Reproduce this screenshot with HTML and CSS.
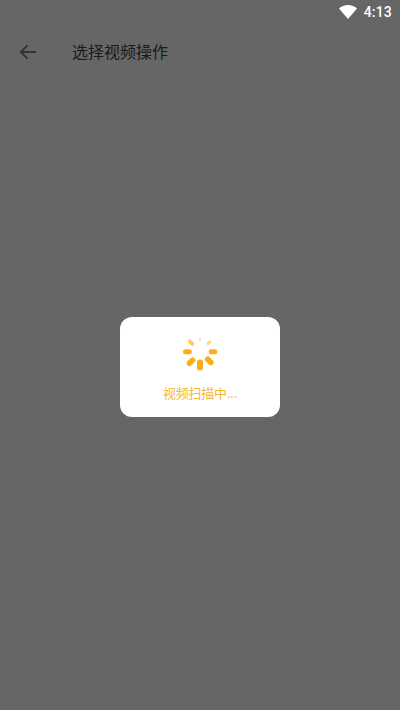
FILE: index.html
```html
<!DOCTYPE html>
<html lang="zh">
<head>
<meta charset="utf-8">
<title>选择视频操作</title>
<link rel="stylesheet" href="styles.css">
</head>
<body>
<div class="screen">
  <div class="status">
    <svg class="wifi" width="18" height="14" viewBox="0 0 18 14"><path d="M0 3.400C2.400 1.300 5.500 0 9 0s6.600 1.300 9 3.400L9 14z" fill="#fff"/></svg>
    <span class="time">4:13</span>
  </div>
  <header class="toolbar">
    <svg class="back" width="18" height="16" viewBox="0 0 18 16"><path d="M17 8H2M8.500 1.300 1.800 8l6.700 6.700" fill="none" stroke="#333" stroke-width="1.800"/></svg>
    <h1 class="title">选择视频操作</h1>
  </header>
  <div class="overlay">
    <div class="dialog">
      <svg class="spinner" width="36" height="36" viewBox="0 0 36 36">
        <rect x="15" y="22.500" width="6" height="11" rx="3"/>
        <rect x="6.200" y="19.700" width="5.600" height="10" rx="2.800" transform="rotate(45 9 24.700)"/>
        <rect x="24.500" y="18.900" width="5.600" height="10" rx="2.800" transform="rotate(-45 27.300 23.900)"/>
        <rect x="1" y="12.200" width="8.800" height="5" rx="2.500"/>
        <rect x="26.700" y="12.200" width="8.600" height="5" rx="2.500"/>
        <rect class="t4" x="7" y="2.200" width="4" height="7" rx="2" transform="rotate(-45 9 5.700)"/>
        <rect class="t5" x="25.600" y="2.900" width="2.800" height="5.600" rx="1.400" transform="rotate(45 27 5.700)"/>
        <rect class="t6" x="17.100" y="0.700" width="1.800" height="4" rx="0.900"/>
      </svg>
      <p class="label">视频扫描中...</p>
    </div>
  </div>
</div>
</body>
</html>
```

FILE: styles.css
```css
html, body {
  margin: 0;
  padding: 0;
  height: 100%;
}
body {
  background: #666666;
  font-family: "Noto Sans CJK SC", "Roboto", sans-serif;
}
.screen {
  width: 400px;
  height: 710px;
  position: relative;
  overflow: hidden;
}
.status {
  height: 24px;
  display: flex;
  align-items: center;
  justify-content: flex-end;
  gap: 7px;
  padding-right: 8px;
}
.wifi {
  display: block;
  margin-bottom: 1px;
}
.time {
  font-family: "Roboto", sans-serif;
  font-size: 14px;
  font-weight: 500;
  color: #fff;
  letter-spacing: 0.2px;
}
.toolbar {
  height: 56px;
  display: flex;
  align-items: center;
  padding-left: 19px;
}
.back {
  display: block;
}
.title {
  margin: 0 0 2px 35px;
  font-size: 16px;
  line-height: 22px;
  font-weight: 400;
  color: #1a1a1a;
}
.overlay {
  position: absolute;
  inset: 0;
  padding-top: 24px;
  display: flex;
  align-items: center;
  justify-content: center;
  box-sizing: border-box;
}
.dialog {
  width: 160px;
  height: 100px;
  background: #fff;
  border-radius: 12px;
  display: flex;
  flex-direction: column;
  align-items: center;
  padding-top: 20px;
  box-sizing: border-box;
}
.spinner {
  display: block;
  width: 36px;
  height: 36px;
}
.spinner rect { fill: #fdae12; }
.spinner .t4 { opacity: 0.65; }
.spinner .t5 { opacity: 0.5; }
.spinner .t6 { opacity: 0.35; }
.label {
  margin: 11px 0 0;
  font-size: 13px;
  line-height: 18px;
  letter-spacing: -0.2px;
  color: #f7b531;
}
```
